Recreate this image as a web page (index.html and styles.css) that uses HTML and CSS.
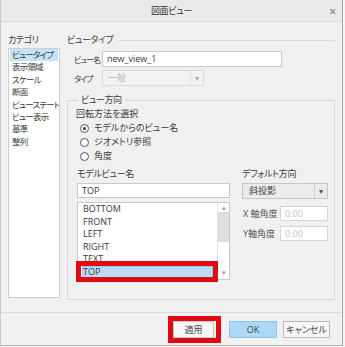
FILE: index.html
```html
<!DOCTYPE html>
<html lang="ja">
<head>
  <meta charset="utf-8" />
  <title>図面ビュー</title>
  <link rel="stylesheet" href="styles.css">
</head>
<body>
  <div class="dialog">
    <div class="titlebar">
      <span class="title">図面ビュー</span>
      <span class="close">×</span>
    </div>

    <div class="main">
      <!-- Category list -->
      <div class="category">
        <div class="cat-label">カテゴリ</div>
        <ul class="cat-list">
          <li class="selected">ビュータイプ</li>
          <li>表示領域</li>
          <li>スケール</li>
          <li>断面</li>
          <li>ビューステート</li>
          <li>ビュー表示</li>
          <li>基準</li>
          <li>整列</li>
        </ul>
      </div>

      <div class="content">
        <div class="section-head"><span>ビュータイプ</span><span class="rule"></span></div>

        <div class="field-row">
          <span class="field-label">ビュー名</span>
          <div class="textbox name-box">new_view_1</div>
        </div>
        <div class="field-row row-type">
          <span class="field-label">タイプ</span>
          <div class="dropdown type-box disabled">
            <span class="dd-text">一般</span>
            <span class="dd-arrow">▾</span>
          </div>
        </div>

        <fieldset class="group">
          <legend>ビュー方向</legend>
          <div class="group-sub">回転方法を選択</div>
          <div class="radios">
            <div class="radio-row"><span class="radio checked"></span>モデルからのビュー名</div>
            <div class="radio-row"><span class="radio"></span>ジオメトリ参照</div>
            <div class="radio-row"><span class="radio"></span>角度</div>
          </div>

          <div class="orient">
            <div class="col-left">
              <div class="col-label">モデルビュー名</div>
              <div class="textbox top-box">TOP</div>
              <div class="listbox">
                <ul class="view-list">
                  <li>BOTTOM</li>
                  <li>FRONT</li>
                  <li>LEFT</li>
                  <li>RIGHT</li>
                  <li>TEXT</li>
                  <li class="selected">TOP</li>
                </ul>
                <div class="scrollbar">
                  <span class="sb-up">▴</span>
                  <span class="sb-thumb"></span>
                  <span class="sb-down">▾</span>
                </div>
                <span class="mark mark-list"></span>
              </div>
            </div>

            <div class="col-right">
              <div class="col-label">デフォルト方向</div>
              <div class="dropdown dir-box">
                <span class="dd-text">斜投影</span>
                <span class="dd-arrow">▾</span>
              </div>
              <div class="angle-row">
                <span class="angle-label">X 軸角度</span>
                <div class="textbox angle-box">0.00</div>
              </div>
              <div class="angle-row second">
                <span class="angle-label">Y軸角度</span>
                <div class="textbox angle-box">0.00</div>
              </div>
            </div>
          </div>
        </fieldset>
      </div>
    </div>

    <div class="footer">
      <button type="button" class="btn btn-apply">適用<span class="mark mark-btn"></span></button>
      <button type="button" class="btn btn-ok">OK</button>
      <button type="button" class="btn btn-cancel">キャンセル</button>
    </div>
  </div>
</body>
</html>
```

FILE: styles.css
```css
html, body {
  margin: 0;
  padding: 0;
  background-color: #f4f4f4;
}
body {
  font-family: "Open Sans", "Noto Sans CJK JP", sans-serif;
  font-size: 9px;
  font-feature-settings: "palt";
  color: #3a3a3a;
  white-space: nowrap;
}
ul {
  list-style: none;
  margin: 0;
  padding: 0;
}
.dialog {
  width: 341px;
  height: 345px;
  background-color: #f0f0f0;
  border-left: 1px solid #c9c9c9;
  border-right: 1px solid #a9a9a9;
  border-bottom: 1px solid #b5b5b5;
}
.titlebar {
  height: 21px;
  border-bottom: 1px solid #d8d8d8;
  background-color: #e9e9e9;
  display: flex;
  align-items: center;
  justify-content: center;
  position: relative;
}
.title {
  font-size: 9px;
  letter-spacing: -0.3px;
  color: #333;
}
.close {
  position: absolute;
  right: 6px;
  top: 3px;
  font-size: 12px;
  color: #666;
}
.main {
  height: 279px;
  padding: 11px 0 0 7px;
  display: flex;
}

/* category column */
.category {
  width: 52px;
}
.cat-label {
  height: 14px;
  line-height: 14px;
  letter-spacing: -0.4px;
}
.cat-list {
  margin-top: 1px;
  height: 250px;
  box-sizing: border-box;
  border: 1px solid #cdcdcd;
  background-color: #fff;
  overflow: hidden;
}
.cat-list li {
  height: 12.4px;
  line-height: 12.4px;
  margin: 0 1px;
  padding-left: 2px;
  font-size: 8.5px;
  letter-spacing: -0.8px;
}
.cat-list li.selected {
  background-color: #c4e2f8;
}

/* right side */
.content {
  margin-left: 6px;
  width: 269px;
}
.section-head {
  height: 14px;
  line-height: 14px;
  display: flex;
  align-items: center;
  padding-left: 1px;
  letter-spacing: -0.4px;
}
.section-head .rule {
  flex: 1;
  margin-left: 5px;
  border-top: 1px solid #d9d9d9;
}
.field-row {
  margin-top: 4px;
  height: 16px;
  display: flex;
  align-items: center;
}
.field-row.row-type {
  margin-top: 3px;
}
.field-label {
  width: 28px;
  padding-left: 8px;
  font-size: 8px;
  letter-spacing: -1px;
}
.textbox {
  box-sizing: border-box;
  height: 16px;
  line-height: 14px;
  border: 1px solid #c9c9c9;
  background-color: #fff;
  padding-left: 4px;
}
.name-box {
  width: 180px;
}
.dropdown {
  box-sizing: border-box;
  height: 16px;
  display: flex;
  border: 1px solid #c6c6c6;
  background-color: #ebebeb;
}
.dropdown .dd-text {
  flex: 1;
  line-height: 14px;
  padding-left: 5px;
}
.dropdown .dd-arrow {
  width: 12px;
  border-left: 1px solid #d0d0d0;
  text-align: center;
  line-height: 14px;
  font-size: 8px;
  color: #555;
}
.type-box {
  width: 102px;
}
.dropdown.disabled {
  border-color: #dadada;
  background-color: #f2f2f2;
  color: #b8b8b8;
}
.dropdown.disabled .dd-arrow {
  border-left-color: #e2e2e2;
  color: #aaa;
}

/* group box */
.group {
  margin: 7px 0 0 1px;
  width: 268px;
  height: 207px;
  box-sizing: border-box;
  border: 1px solid #d6d6d6;
  padding: 0 6px 0 8px;
  min-width: 0;
}
.group legend {
  margin-left: 2px;
  padding: 0 3px;
  height: 14px;
  line-height: 14px;
  letter-spacing: -0.4px;
}
.group-sub {
  height: 14px;
  line-height: 14px;
}
.radios {
  padding-left: 4px;
}
.radio-row {
  height: 14px;
  line-height: 14px;
  display: flex;
  align-items: center;
}
.radio {
  width: 9px;
  height: 9px;
  box-sizing: border-box;
  border: 1px solid #555;
  border-radius: 50%;
  background-color: #fff;
  margin-right: 5px;
  position: relative;
}
.radio.checked::after {
  content: "";
  position: absolute;
  left: 2px;
  top: 2px;
  width: 3px;
  height: 3px;
  border-radius: 50%;
  background-color: #333;
}

.orient {
  margin-top: 4px;
  padding-left: 1px;
  display: flex;
  gap: 12px;
}
.col-left {
  width: 153px;
}
.col-right {
  width: 86px;
}
.col-label {
  height: 14px;
  line-height: 14px;
  letter-spacing: -0.3px;
}
.top-box {
  margin-top: 2px;
  height: 15px;
  line-height: 13px;
}
.listbox {
  position: relative;
  margin-top: 4px;
  height: 78px;
  box-sizing: border-box;
  border: 1px solid #c9c9c9;
  background-color: #fff;
  display: flex;
}
.view-list {
  flex: 1;
  overflow: hidden;
}
.view-list li {
  height: 12.6px;
  line-height: 12.6px;
  margin: 0 4px;
  padding-left: 1px;
}
.view-list li.selected {
  background-color: #b8def8;
  outline: 1px dotted #8aa9c0;
  outline-offset: -1px;
}
.scrollbar {
  width: 11px;
  border-left: 1px solid #e2e2e2;
  display: flex;
  flex-direction: column;
  align-items: center;
  color: #9a9a9a;
  font-size: 7px;
}
.sb-up {
  height: 9px;
  line-height: 9px;
}
.sb-thumb {
  width: 11px;
  height: 30px;
  background-color: #dedede;
}
.sb-down {
  margin-top: auto;
  height: 12px;
  line-height: 12px;
}

.dir-box {
  margin-top: 2px;
}
.dir-box .dd-text {
  padding-left: 6px;
}
.angle-row {
  margin-top: 7px;
  display: flex;
  align-items: center;
  justify-content: space-between;
  padding-left: 1px;
}
.angle-row.second {
  margin-top: 5px;
}
.angle-label {
  color: #555;
}
.angle-box {
  width: 48px;
  height: 15px;
  line-height: 13px;
  color: #c2c2c2;
  border-color: #d6d6d6;
}

/* footer */
.footer {
  height: 32px;
  border-top: 1px solid #dadada;
  display: flex;
  justify-content: flex-end;
  align-items: flex-start;
  padding: 8px 12px 0 0;
  box-sizing: border-box;
}
.btn {
  position: relative;
  height: 17px;
  padding: 0;
  font-family: inherit;
  font-size: 9px;
  font-feature-settings: "palt";
  color: #444;
  border: 1px solid #c6c6c6;
  background-color: #f7f7f7;
}
.btn-apply {
  width: 41px;
  margin-right: 15px;
}
.btn-ok {
  width: 48px;
  margin-right: 6px;
  background-color: #aad8f6;
  border-color: #8cc6ee;
}
.btn-cancel {
  width: 47px;
  border-color: #b9b9b9;
}

/* red annotation marks */
.mark {
  position: absolute;
  box-sizing: border-box;
  border: 5px solid #e00b12;
}
.mark-list {
  left: -2px;
  top: 58px;
  width: 142px;
  height: 21px;
}
.mark-btn {
  left: -6px;
  top: -6px;
  width: 53px;
  height: 27px;
}
```
